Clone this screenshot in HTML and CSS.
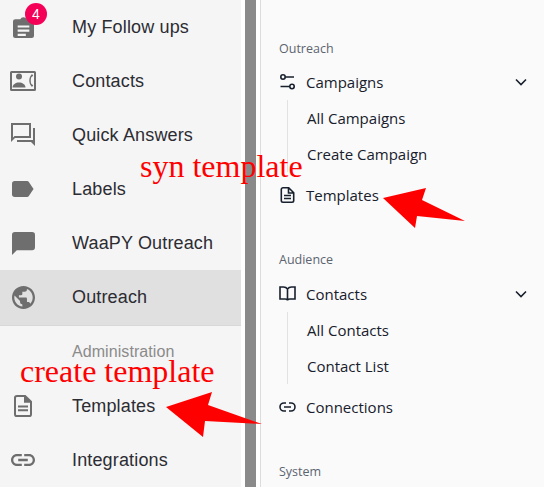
FILE: index.html
```html
<!DOCTYPE html>
<html lang="en">
<head>
  <meta charset="UTF-8">
  <title>Templates</title>
  <link rel="stylesheet" href="styles.css">
</head>
<body>
  <div class="shot">

    <!-- app sidebar -->
    <nav class="side">
      <a class="side-item">
        <span class="side-icon">
          <svg width="21" height="22" viewBox="3 2 18 21" preserveAspectRatio="none"><path d="M5 5h4.200a3 3 0 0 1 5.600 0H19a2 2 0 0 1 2 2v14a2 2 0 0 1-2 2H5a2 2 0 0 1-2-2V7a2 2 0 0 1 2-2z"/><path fill="#f5f5f5" d="M7 11h10v2H7zM7 15h10v2H7zM7 19h7v2H7z"/></svg>
          <span class="badge">4</span>
        </span>
        My Follow ups
      </a>
      <a class="side-item">
        <span class="side-icon">
          <svg width="28" height="22" viewBox="0 0 28 22"><path fill-rule="evenodd" d="M2.500 1h23A1.500 1.500 0 0 1 27 2.500v17a1.500 1.500 0 0 1-1.500 1.500h-23A1.500 1.500 0 0 1 1 19.500v-17A1.500 1.500 0 0 1 2.500 1zM3 3v16h22V3z"/><circle cx="10" cy="6.500" r="3"/><path d="M3.500 17.500c0-3 3.200-5 6.500-5s6.500 2 6.500 5z"/><path d="M23 4c-3.600 3.500-3.600 9.500 0 13l1.300-1.700-1.800-1.300c-1-1-1-6 0-7l1.800-1.300z"/></svg>
        </span>
        Contacts
      </a>
      <a class="side-item">
        <span class="side-icon">
          <svg width="24" height="24" viewBox="0 0 24 24"><path fill-rule="evenodd" d="M0 0h20v15H4l-4 4zM2 2v12.500L3.500 13H18V2z"/><path d="M22 5h2v18l-4-4H6v-2h16z"/></svg>
        </span>
        Quick Answers
      </a>
      <a class="side-item">
        <span class="side-icon">
          <svg width="22" height="16" viewBox="0 0 24 18" preserveAspectRatio="none"><path d="M3 0h13.500c.700 0 1.300.300 1.700.900L23.500 9l-5.300 8.100c-.400.600-1 .900-1.700.900H3a3 3 0 0 1-3-3V3a3 3 0 0 1 3-3z"/></svg>
        </span>
        Labels
      </a>
      <a class="side-item">
        <span class="side-icon">
          <svg width="23" height="23" viewBox="0 0 24 24"><path d="M3 0h18a3 3 0 0 1 3 3v13a3 3 0 0 1-3 3H5l-5 5V3a3 3 0 0 1 3-3z"/></svg>
        </span>
        WaaPY Outreach
      </a>
      <a class="side-item active">
        <span class="side-icon">
          <svg width="23" height="23" viewBox="2 2 20 20"><path d="M12 2C6.480 2 2 6.480 2 12s4.480 10 10 10 10-4.480 10-10S17.520 2 12 2zm-1 17.930c-3.950-.490-7-3.850-7-7.930 0-.620.080-1.210.210-1.790L9 15v1c0 1.100.900 2 2 2v1.930zm6.900-2.540c-.260-.810-1-1.390-1.900-1.390h-1v-3c0-.550-.450-1-1-1H8v-2h2c.550 0 1-.450 1-1V7h2c1.100 0 2-.900 2-2v-.410c2.930 1.190 5 4.060 5 7.410 0 2.080-.800 3.970-2.100 5.390z"/></svg>
        </span>
        Outreach
      </a>
      <div class="side-heading">Administration</div>
      <a class="side-item">
        <span class="side-icon">
          <svg width="18" height="22" viewBox="0 0 18 23" preserveAspectRatio="none"><path fill-rule="evenodd" d="M3 0h8.500L18 6.500V20a3 3 0 0 1-3 3H3a3 3 0 0 1-3-3V3a3 3 0 0 1 3-3zM2 3v17c0 .600.400 1 1 1h12c.600 0 1-.400 1-1V8h-6V2H3c-.600 0-1 .400-1 1z"/><path d="M4 11h10v2H4zM4 15h10v2H4z"/></svg>
        </span>
        Templates
      </a>
      <a class="side-item">
        <span class="side-icon">
          <svg width="24" height="12" viewBox="2 7 20 10"><path d="M3.900 12c0-1.710 1.390-3.100 3.100-3.100h4V7H7c-2.760 0-5 2.240-5 5s2.240 5 5 5h4v-1.900H7c-1.710 0-3.100-1.390-3.100-3.100zM8 13h8v-2H8v2zm9-6h-4v1.900h4c1.710 0 3.100 1.390 3.100 3.100s-1.390 3.100-3.100 3.100h-4V17h4c2.760 0 5-2.240 5-5s-2.240-5-5-5z"/></svg>
        </span>
        Integrations
      </a>
    </nav>

    <div class="split"></div>

    <!-- settings menu -->
    <aside class="menu">
      <div class="menu-heading">Outreach</div>
      <a class="menu-item">
        <svg class="menu-icon" width="16" height="16" viewBox="0 0 16 16"><circle cx="3.500" cy="3" r="2.200"/><circle cx="12.500" cy="12.500" r="2.200"/><path d="M6 3h8.500M1 12.500h9"/></svg>
        Campaigns
        <svg class="chevron" width="12" height="8" viewBox="0 0 12 8"><path d="M1 1.500l5 5 5-5"/></svg>
      </a>
      <div class="sub">
        <a class="sub-item">All Campaigns</a>
        <a class="sub-item">Create Campaign</a>
      </div>
      <a class="menu-item">
        <svg class="menu-icon" width="14" height="16" viewBox="0 0 14 16"><path d="M2.500.800h5.700l5 5v7.700a1.700 1.700 0 0 1-1.700 1.700h-9A1.700 1.700 0 0 1 .800 13.500v-11A1.700 1.700 0 0 1 2.500.800zM8 1v5h5M3.500 8.500h7M3.500 11.500h7"/></svg>
        Templates
      </a>
      <div class="menu-heading audience">Audience</div>
      <a class="menu-item">
        <svg class="menu-icon" width="17" height="16" viewBox="0 0 17 16"><path d="M8.500 3v11.500M8.500 3c-1-1.400-2.600-2-4-2H1v12h5c1.300 0 2.500.300 2.500 1.500 0-1.200 1.200-1.500 2.500-1.500h5V1h-3.500c-1.400 0-3 .600-4 2z"/></svg>
        Contacts
        <svg class="chevron" width="12" height="8" viewBox="0 0 12 8"><path d="M1 1.500l5 5 5-5"/></svg>
      </a>
      <div class="sub">
        <a class="sub-item">All Contacts</a>
        <a class="sub-item">Contact List</a>
      </div>
      <a class="menu-item">
        <svg class="menu-icon" width="16" height="10" viewBox="0 0 16 10"><path d="M6.500 1H4.500a4 4 0 0 0 0 8h2M9.500 1h2a4 4 0 0 1 0 8h-2M4.500 5h7"/></svg>
        Connections
      </a>
      <div class="menu-heading system">System</div>
    </aside>

    <!-- annotations drawn over the screenshot -->
    <span class="note note-syn">syn template</span>
    <span class="note note-create">create template</span>
    <svg class="arrows" width="544" height="487" viewBox="0 0 544 487">
      <path d="M166 407L212 392 208 405 262 424 205 421 203 437z"/>
      <path d="M383 198L426 188 422 200 465 221 417 216 415 228z"/>
    </svg>
  </div>
</body>
</html>
```

FILE: styles.css
```css
html, body {
  margin: 0;
  padding: 0;
}

.shot {
  position: relative;
  display: flex;
  width: 544px;
  height: 487px;
  overflow: hidden;
  background: #fff;
}

/* App sidebar */
.side {
  flex: 0 0 241px;
  background: #f5f5f5;
  font-family: "Liberation Sans", Arial, sans-serif;
  font-size: 18px;
  letter-spacing: 0.15px;
  color: #2c2c33;
}

.side-item {
  display: flex;
  align-items: center;
  height: 54px;
}

.side-item.active {
  background: #e0e0e0;
  border-bottom: 1px solid #d8d8d8;
  height: 55px;
  margin-bottom: -1px;
}

.side-icon {
  position: relative;
  flex: 0 0 46px;
  display: flex;
  justify-content: center;
  margin-right: 26px;
}

.side-icon svg {
  fill: #6e6e6e;
}

.badge {
  position: absolute;
  top: -13px;
  left: 25px;
  width: 22px;
  height: 22px;
  border-radius: 50%;
  background: #f50057;
  color: #fff;
  font-size: 14px;
  line-height: 22px;
  text-align: center;
}

.side-heading {
  height: 54px;
  padding: 18px 0 0 72px;
  box-sizing: border-box;
  font-size: 16px;
  line-height: 18px;
  letter-spacing: 0.07px;
  color: #8b8b8b;
}

/* Divider between the two screenshots */
.split {
  flex: 0 0 11px;
  margin: 0 4px;
  background: #8a8a8a;
}

/* Settings menu */
.menu {
  flex: 1;
  padding: 40px 0 0 18px;
  background: #fafafa;
  border-left: 1px solid #dcdcdc;
  font-family: "Open Sans", "Noto Sans", sans-serif;
  font-size: 15px;
  color: #17202c;
}

.menu-heading {
  font-size: 12.500px;
  line-height: 17px;
  color: #5c6470;
  margin-bottom: 7px;
}

.menu-heading.audience {
  margin-top: 38px;
  margin-bottom: 8px;
}

.menu-heading.system {
  margin-top: 38px;
}

.menu-item {
  display: flex;
  align-items: center;
  height: 36px;
  width: 252px;
}

.menu-icon {
  flex: 0 0 auto;
  width: 17px;
  margin-right: 10px;
  fill: none;
  stroke: #17202c;
  stroke-width: 1.600;
}

.chevron {
  margin-left: auto;
  margin-right: 4px;
  fill: none;
  stroke: #17202c;
  stroke-width: 1.600;
}

.sub {
  margin: 0 0 5px 8px;
  padding-left: 19px;
  border-left: 1px solid #e2e2e2;
}

.sub-item {
  display: flex;
  align-items: center;
  height: 36px;
}

/* Annotations */
.note {
  position: absolute;
  font-family: "Liberation Serif", "Times New Roman", serif;
  font-size: 32px;
  color: #ff0000;
  white-space: nowrap;
}

.note-syn {
  left: 140px;
  top: 148px;
}

.note-create {
  left: 20px;
  top: 353px;
}

.arrows {
  position: absolute;
  left: 0;
  top: 0;
  fill: #ff0000;
}
```
